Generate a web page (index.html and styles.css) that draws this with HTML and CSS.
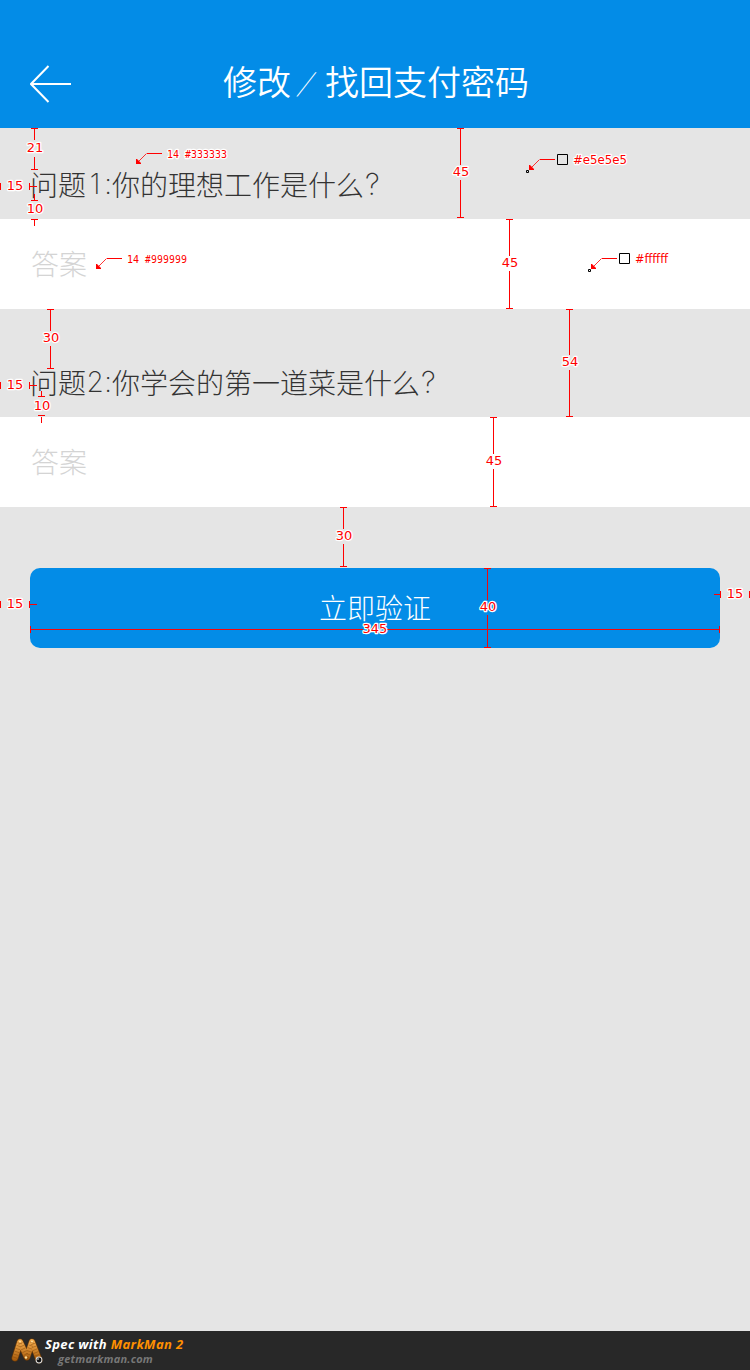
FILE: index.html
```html
<!DOCTYPE html>
<html lang="zh-CN">
<head>
<meta charset="utf-8">
<title>修改/找回支付密码</title>
<link rel="stylesheet" href="styles.css">
</head>
<body>
<div class="page">
  <header class="bar">
    <svg class="back" width="42" height="38" viewBox="0 0 42 38"><path d="M18.500 1L1 19L18.500 37M1 19H41"/></svg>
    <h1 class="title">修改<span class="slash"><span class="slant">/</span></span>找回支付密码</h1>
  </header>
  <main class="form">
    <p class="question">问题<span class="num">1</span><span class="colon">:</span>你的理想工作是什么<span class="mark">?</span></p>
    <div class="answer">答案</div>
    <p class="question second">问题<span class="num">2</span><span class="colon">:</span>你学会的第一道菜是什么<span class="mark">?</span></p>
    <div class="answer">答案</div>
    <div class="submit">立即验证</div>
  </main>
  <footer class="credit">
    <svg class="logo" width="34" height="28" viewBox="0 0 34 28">
      <defs><linearGradient id="g" x1="0" y1="0" x2="0" y2="1"><stop offset="0" stop-color="#f0a84a"/><stop offset="1" stop-color="#a85c0c"/></linearGradient></defs>
      <g fill="none" stroke-linecap="round" stroke-linejoin="round">
        <path d="M4 21L9 5L16 20L21 5L28 23" stroke="#6b3a08" stroke-width="7"/>
        <path d="M4 21L9 5L16 20L21 5L28 23" stroke="url(#g)" stroke-width="5.6"/>
        <path d="M4 21L9 5L16 20L21 5L28 23" stroke="#7d440a" stroke-width="4.6" stroke-linecap="butt" stroke-dasharray=".8 2.2" opacity=".5"/>
      </g>
      <circle cx="9" cy="4.5" r="1" fill="#ffe09a"/><circle cx="21" cy="4.5" r="1" fill="#ffe09a"/><circle cx="15" cy="20.500" r="1.2" fill="#ffe09a"/>
      <circle cx="28" cy="23" r="3.4" fill="#ddd"/><circle cx="28" cy="23" r="2.4" fill="#111"/><circle cx="27" cy="22" r=".8" fill="#fff"/>
    </svg>
    <div class="credit-text">
      <div class="credit-main">Spec with <span class="brand">MarkMan 2</span></div>
      <div class="credit-site">getmarkman.com</div>
    </div>
  </footer>
  <svg class="spec" width="750" height="1370" viewBox="0 0 750 1370">
    <g class="rule">
      <path d="M31 128.500H38M34.500 128V140M34.500 157V170M31 169.500H38M34.500 194V200M31 200.500H38M31 219.500H38M34.500 219V226"/>
      <path d="M.5 183V190M29.500 183V190M29 186.500H37"/>
      <path d="M457 128.500H464M460.500 128V165M460.500 180V218M457 217.500H464"/>
      <path d="M506 219.500H513M509.500 219V256M509.500 271V309M506 308.500H513"/>
      <path d="M47 309.500H54M50.500 309V331M50.500 346V369M47 368.500H54"/>
      <path d="M566 309.500H573M569.500 309V355M569.500 370V417M566 416.500H573"/>
      <path d="M.5 382V389M29.500 382V389M29 385.500H37"/>
      <path d="M41.500 391V397M38 396.500H45M38 415.500H45M41.500 417V423"/>
      <path d="M490 417.500H497M493.500 417V454M493.500 469V507M490 506.500H497"/>
      <path d="M340 507.500H347M343.500 507V529M343.500 544V567M340 566.500H347"/>
      <path d="M.5 601V608M29.500 601V608"/>
      <path d="M749.500 591V598M720.500 591V598"/>
      <path d="M484 568.500H491M484 647.500H491M30.500 626V633M719.500 626V633M30 604.500H37M714 594.500H720"/>
      <path d="M146.500 153.500H161.500M106.500 258.500H121.500M539.500 159.500H554.500M601.500 258.500H616.500"/>
    </g>
    <g class="rule faint">
      <path d="M487.500 569V600M487.500 615V647M31 629.500H363M387 629.500H719"/>
    </g>
    <g class="lead">
      <path d="M146.500 153.500L139 161M106.500 258.500L99 266M539.500 159.500L532 167M601.500 258.500L594 266"/>
    </g>
    <path class="tip" d="M136 159h1l4 4v1h-5zM96 264h1l4 4v1h-5zM529 165h1l4 4v1h-5zM591 264h1l4 4v1h-5z"/>
    <path class="swatch" d="M557.500 154.500h10v10h-10zM619.500 253.500h10v10h-10zM526.500 170.500h2v2h-2zM588.500 269.500h2v2h-2z"/>
    <g class="label">
      <text x="35" y="152">21</text><text x="15" y="190">15</text><text x="35" y="213">10</text>
      <text x="461" y="176">45</text><text x="510" y="267">45</text><text x="51" y="342">30</text>
      <text x="570" y="366">54</text><text x="15" y="389">15</text><text x="42" y="410">10</text>
      <text x="494" y="465">45</text><text x="344" y="540">30</text><text x="15" y="608">15</text>
      <text x="735" y="598">15</text><text x="488" y="611">40</text><text x="375" y="633">345</text>
    </g>
    <g class="label start">
      <text x="573" y="164" textLength="54" lengthAdjust="spacingAndGlyphs">#e5e5e5</text>
      <text x="635" y="263" textLength="33" lengthAdjust="spacingAndGlyphs">#ffffff</text>
    </g>
    <g class="label small">
      <text x="167" y="158" textLength="12">14</text><text x="185" y="158" textLength="42">#333333</text>
      <text x="127" y="263" textLength="12">14</text><text x="145" y="263" textLength="42">#999999</text>
    </g>
  </svg>
</div>
</body>
</html>
```

FILE: styles.css
```css
body { margin: 0; }
.page {
  position: relative;
  display: flex;
  flex-direction: column;
  width: 750px;
  height: 1370px;
  overflow: hidden;
  background: #e5e5e5;
  font-family: "Noto Sans CJK SC", sans-serif;
  font-weight: 300;
}
.bar {
  box-sizing: border-box;
  display: flex;
  align-items: center;
  height: 128px;
  padding: 40px 30px 0;
  background: #038ce7;
  color: #fff;
}
.back { fill: none; stroke: #fff; stroke-width: 2; }
.title {
  display: flex;
  margin: 0 0 3px 151px;
  font-size: 34px;
  line-height: 50px;
  font-weight: 350;
}
.slash {
  width: 34px;
  text-align: center;
}
.slant {
  display: inline-block;
  font-size: 25px;
  font-weight: 300;
  transform: translateY(-3px) skewX(-24deg);
}
.form { flex: 1; }
.question {
  box-sizing: border-box;
  display: flex;
  height: 91px;
  margin: 0;
  padding: 36px 0 0 30px;
  font-size: 28px;
  line-height: 41px;
  color: #333;
}
.second { height: 108px; padding-top: 53px; }
.num,
.colon,
.mark {
  font-family: Inter, sans-serif;
  font-weight: 200;
}
.num { width: 18px; text-align: center; }
.colon { width: 8px; text-align: center; }
.mark { padding-left: 1px; font-size: 30px; }
.answer {
  height: 90px;
  padding-left: 31px;
  background: #fff;
  color: #d4d4d4;
  font-size: 28px;
  line-height: 89px;
}
.submit {
  height: 80px;
  margin: 61px 30px 0;
  border-radius: 10px;
  background: #038ce7;
  color: #fff;
  font-size: 28px;
  line-height: 78px;
  text-align: center;
}
.credit {
  display: flex;
  box-sizing: border-box;
  height: 39px;
  padding: 6px 0 0 11px;
  background: #282828;
  font-family: "Open Sans", sans-serif;
  font-style: italic;
  font-weight: 700;
}
.credit-text { line-height: 13px; }
.credit-main { font-size: 13px; line-height: 15px; letter-spacing: .35px; color: #fff; }
.brand { color: #ff9000; }
.credit-site { margin-left: 13px; font-size: 11px; letter-spacing: .22px; color: #777; }
.spec { position: absolute; left: 0; top: 0; }
.rule { fill: none; stroke: #f00; shape-rendering: crispEdges; }
.faint { opacity: .95; }
.lead { stroke: #f00; stroke-width: .8; }
.tip { fill: #f00; }
.swatch { fill: none; stroke: #000; }
.label {
  fill: #f00;
  stroke: #fff;
  stroke-width: 2.5px;
  stroke-linejoin: round;
  paint-order: stroke;
  font: 400 13px "DejaVu Sans", sans-serif;
  text-anchor: middle;
}
.start { text-anchor: start; }
.small {
  font: 10px "DejaVu Sans Mono", monospace;
  text-anchor: start;
}
```
